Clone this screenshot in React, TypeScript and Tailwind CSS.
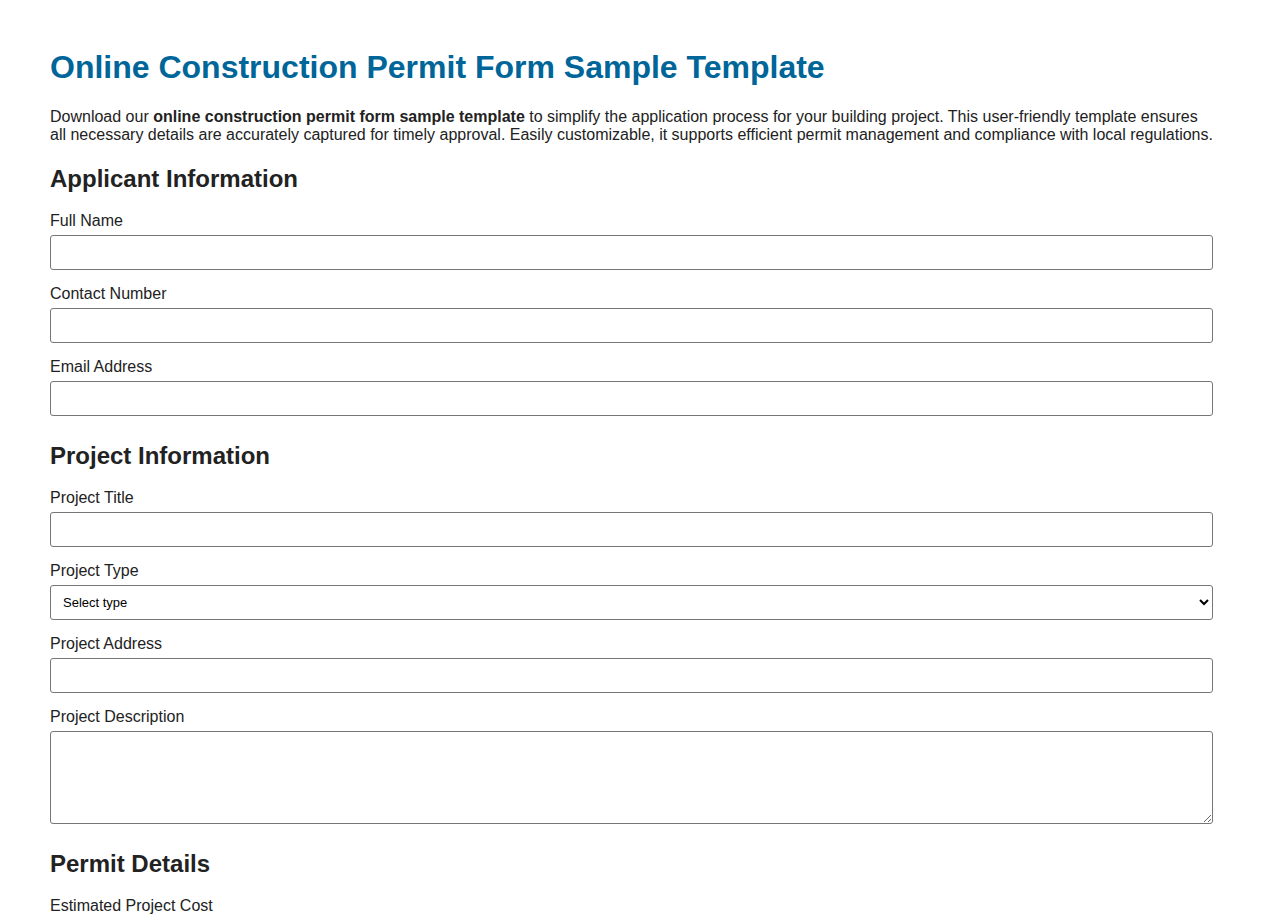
const fieldClass =
  "block w-full h-[35px] border border-[#767676] rounded-[3px] bg-white px-2 text-[16px] mb-[15px]";

function Field({ label, children }: { label: string; children?: React.ReactNode }) {
  return (
    <div>
      <label className="block text-[16px] leading-[18px] mb-[5px]">{label}</label>
      {children ?? <input type="text" className={fieldClass} />}
    </div>
  );
}

export default function App() {
  return (
    <div
      className="min-h-screen bg-white text-[#222] px-[50px] pt-[49px] pb-10"
      style={{ fontFamily: '"Liberation Sans", Arial, sans-serif' }}
    >
      <h1 className="text-[32px] leading-[37px] font-bold text-[#006699]">
        Online Construction Permit Form Sample Template
      </h1>
      <p className="mt-[22px] text-[16px] leading-[18px]">
        Download our <strong>online construction permit form sample template</strong> to simplify the
        application process for your building project. This user-friendly template ensures all necessary
        details are accurately captured for timely approval. Easily customizable, it supports efficient
        permit management and compliance with local regulations.
      </p>

      <h2 className="mt-[21px] mb-[19px] text-[24px] leading-[28px] font-bold">Applicant Information</h2>
      <Field label="Full Name" />
      <Field label="Contact Number" />
      <Field label="Email Address" />

      <h2 className="mt-[26px] mb-[19px] text-[24px] leading-[28px] font-bold">Project Information</h2>
      <Field label="Project Title" />
      <Field label="Project Type">
        <select className="block w-full h-[35px] border border-[#767676] rounded-[3px] bg-white pl-[8px] pr-2 text-[13px] text-black mb-[15px] appearance-auto">
          <option>Select type</option>
          <option>New Construction</option>
          <option>Renovation</option>
          <option>Demolition</option>
        </select>
      </Field>
      <Field label="Project Address" />
      <Field label="Project Description">
        <textarea className="block w-full h-[93px] border border-[#767676] rounded-[3px] bg-white p-2 text-[16px] mb-[15px]" />
      </Field>

      <h2 className="mt-[26px] mb-[19px] text-[24px] leading-[28px] font-bold">Permit Details</h2>
      <Field label="Estimated Project Cost" />
    </div>
  );
}
